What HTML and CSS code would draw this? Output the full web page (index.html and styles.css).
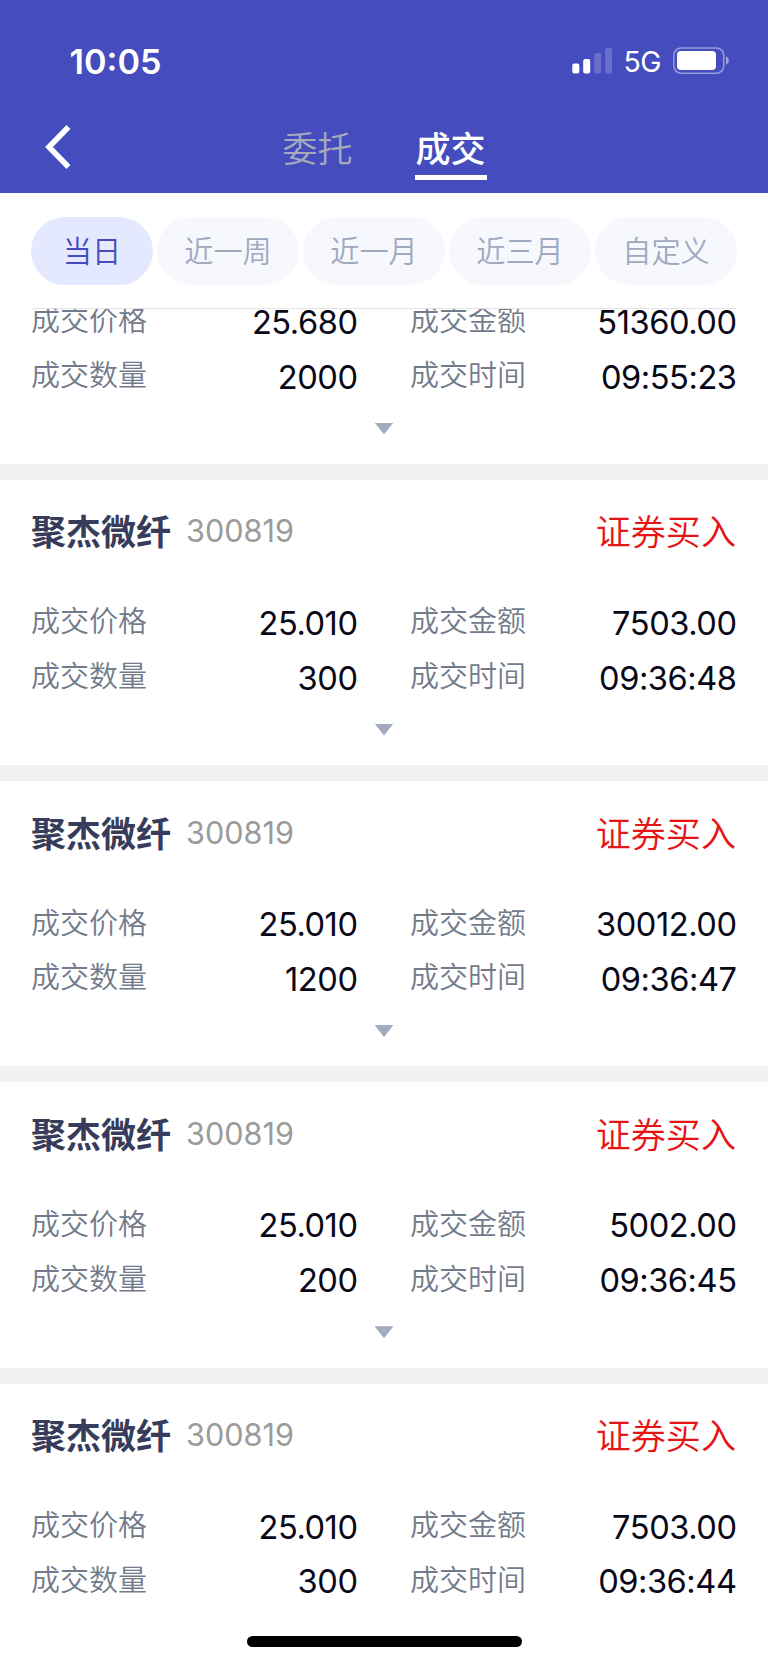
FILE: index.html
```html
<!DOCTYPE html>
<html lang="zh-CN">
<head>
    <meta charset="UTF-8">
    <meta name="viewport" content="width=device-width, initial-scale=1.0">
    <title>成交</title>
    <link rel="stylesheet" href="styles.css">
</head>
<body>
    <header class="header">
        <div class="status-bar">
            <span class="time">10:05</span>
            <div class="status-icons">
                <svg class="signal" width="41" height="26" viewBox="0 0 41 26" fill="#fff">
                    <rect x="0.3" y="15.5" width="7" height="10" rx="2"/>
                    <rect x="11.2" y="11" width="7" height="14.5" rx="2"/>
                    <rect x="22.2" y="5" width="7" height="20.5" rx="2" opacity="0.2"/>
                    <rect x="33.1" y="0" width="7" height="25.5" rx="2" opacity="0.2"/>
                </svg>
                <span class="network">5G</span>
                <svg class="battery" width="57" height="28" viewBox="0 0 57 28">
                    <rect x="0.8" y="0.9" width="50" height="25.4" rx="7.5" fill="none" stroke="#fff" stroke-opacity="0.45" stroke-width="1.5"/>
                    <rect x="4" y="4" width="39" height="19" rx="4" fill="#fff"/>
                    <path d="M53 9.2c1.8 0.9 2.8 2.5 2.8 4.4s-1 3.5-2.8 4.4z" fill="#fff" fill-opacity="0.5"/>
                </svg>
            </div>
        </div>
        <nav class="nav">
            <svg class="back" width="28" height="46" viewBox="0 0 28 46">
                <path d="M23.5 3L4 23L23.5 43" fill="none" stroke="#fff" stroke-width="5.6"/>
            </svg>
            <div class="tabs">
                <span class="tab">委托</span>
                <span class="tab active">成交</span>
            </div>
        </nav>
    </header>

    <div class="filters">
        <span class="chip active">当日</span>
        <span class="chip">近一周</span>
        <span class="chip">近一月</span>
        <span class="chip">近三月</span>
        <span class="chip">自定义</span>
    </div>

    <main class="list">
        <section class="card first">
            <div class="details">
                <div class="item"><span class="label">成交价格</span><span class="value">25.680</span></div>
                <div class="item"><span class="label">成交金额</span><span class="value">51360.00</span></div>
                <div class="item"><span class="label">成交数量</span><span class="value">2000</span></div>
                <div class="item"><span class="label">成交时间</span><span class="value">09:55:23</span></div>
            </div>
            <div class="more"></div>
        </section>

        <section class="card">
            <div class="card-head">
                <span class="name">聚杰微纤</span>
                <span class="code">300819</span>
                <span class="side">证券买入</span>
            </div>
            <div class="details">
                <div class="item"><span class="label">成交价格</span><span class="value">25.010</span></div>
                <div class="item"><span class="label">成交金额</span><span class="value">7503.00</span></div>
                <div class="item"><span class="label">成交数量</span><span class="value">300</span></div>
                <div class="item"><span class="label">成交时间</span><span class="value">09:36:48</span></div>
            </div>
            <div class="more"></div>
        </section>

        <section class="card">
            <div class="card-head">
                <span class="name">聚杰微纤</span>
                <span class="code">300819</span>
                <span class="side">证券买入</span>
            </div>
            <div class="details">
                <div class="item"><span class="label">成交价格</span><span class="value">25.010</span></div>
                <div class="item"><span class="label">成交金额</span><span class="value">30012.00</span></div>
                <div class="item"><span class="label">成交数量</span><span class="value">1200</span></div>
                <div class="item"><span class="label">成交时间</span><span class="value">09:36:47</span></div>
            </div>
            <div class="more"></div>
        </section>

        <section class="card">
            <div class="card-head">
                <span class="name">聚杰微纤</span>
                <span class="code">300819</span>
                <span class="side">证券买入</span>
            </div>
            <div class="details">
                <div class="item"><span class="label">成交价格</span><span class="value">25.010</span></div>
                <div class="item"><span class="label">成交金额</span><span class="value">5002.00</span></div>
                <div class="item"><span class="label">成交数量</span><span class="value">200</span></div>
                <div class="item"><span class="label">成交时间</span><span class="value">09:36:45</span></div>
            </div>
            <div class="more"></div>
        </section>

        <section class="card">
            <div class="card-head">
                <span class="name">聚杰微纤</span>
                <span class="code">300819</span>
                <span class="side">证券买入</span>
            </div>
            <div class="details">
                <div class="item"><span class="label">成交价格</span><span class="value">25.010</span></div>
                <div class="item"><span class="label">成交金额</span><span class="value">7503.00</span></div>
                <div class="item"><span class="label">成交数量</span><span class="value">300</span></div>
                <div class="item"><span class="label">成交时间</span><span class="value">09:36:44</span></div>
            </div>
        </section>
    </main>

    <footer class="home-area">
        <div class="home-bar"></div>
    </footer>
</body>
</html>
```
FILE: styles.css
```css
* {
    box-sizing: border-box;
}

body {
    margin: 0;
    width: 768px;
    height: 1663px;
    overflow: hidden;
    display: flex;
    flex-direction: column;
    background: #fff;
    font-family: Inter, "Noto Sans CJK SC", sans-serif;
}

/* header */
.header {
    flex: none;
    height: 192.5px;
    background: #444cbe;
    color: #fff;
}

.status-bar {
    height: 122px;
    padding: 0 38px 0 69.5px;
    display: flex;
    justify-content: space-between;
    align-items: center;
}

.time {
    font-size: 34.2px;
    font-weight: 600;
}

.status-icons {
    display: flex;
    align-items: center;
}

.network {
    margin: 1px 12px 0 10.5px;
    font-size: 28.5px;
    font-weight: 400;
    letter-spacing: -0.6px;
}

.nav {
    height: 70px;
    display: flex;
}

.back {
    margin: 2px 0 0 45px;
}

.tabs {
    margin-left: 209px;
    display: flex;
    gap: 61px;
}

.tab {
    width: 72px;
    height: 58px;
    padding-left: 0.5px;
    line-height: 55px;
    font-size: 35px;
    font-weight: 350;
    color: #a5abbd;
}

.tab.active {
    font-weight: 500;
    color: #fff;
    border-bottom: 5px solid #fff;
}

/* date filters */
.filters {
    flex: none;
    height: 116.5px;
    margin: 0 31px;
    padding-top: 24.5px;
    display: flex;
    gap: 4px;
    border-bottom: 1px solid #e4e4e4;
}

.chip {
    width: 142px;
    height: 67.5px;
    line-height: 69px;
    border-radius: 34px;
    background: #f6f8fd;
    color: #a0a9c0;
    font-size: 29.2px;
    font-weight: 350;
    text-align: center;
}

.chip.active {
    width: 122px;
    background: #e4e9ff;
    color: #444cbe;
}

/* trade list */
.list {
    flex: none;
    height: 1284px;
    overflow: hidden;
}

.card {
    height: 301.3px;
    border-bottom: 16px solid #f1f1f1;
}

.card.first {
    height: 188px;
    margin-top: -17.3px;
}

.card:last-child {
    border-bottom: none;
}

.card-head {
    height: 113px;
    padding: 0 32px 13px 31px;
    display: flex;
    align-items: center;
}

.name {
    font-size: 35px;
    font-weight: 700;
    color: #373c5a;
}

.code {
    margin: 2px 0 0 15px;
    font-size: 30.6px;
    font-weight: 400;
    color: #9b9b9b;
}

.side {
    margin-left: auto;
    font-size: 35.1px;
    font-weight: 350;
    color: #e61414;
}

.details {
    padding: 0 31px;
    display: grid;
    grid-template-columns: 326.5px 326.5px;
    grid-auto-rows: 54.7px;
    column-gap: 52.5px;
}

.item {
    display: flex;
    justify-content: space-between;
    align-items: center;
}

.label {
    padding-bottom: 1.6px;
    font-size: 29px;
    font-weight: 350;
    color: #737b8b;
}

.value {
    padding-top: 5.6px;
    font-size: 32.6px;
    letter-spacing: -0.45px;
    color: #080818;
}

.more {
    width: 19px;
    height: 12px;
    margin: 21.5px auto 0;
    background: #a2abc0;
    clip-path: polygon(0 0, 100% 0, 50% 100%);
}

/* home indicator */
.home-area {
    padding-top: 43px;
}

.home-bar {
    width: 275px;
    height: 10.5px;
    margin: 0 auto;
    border-radius: 6px;
    background: #000;
}
```
